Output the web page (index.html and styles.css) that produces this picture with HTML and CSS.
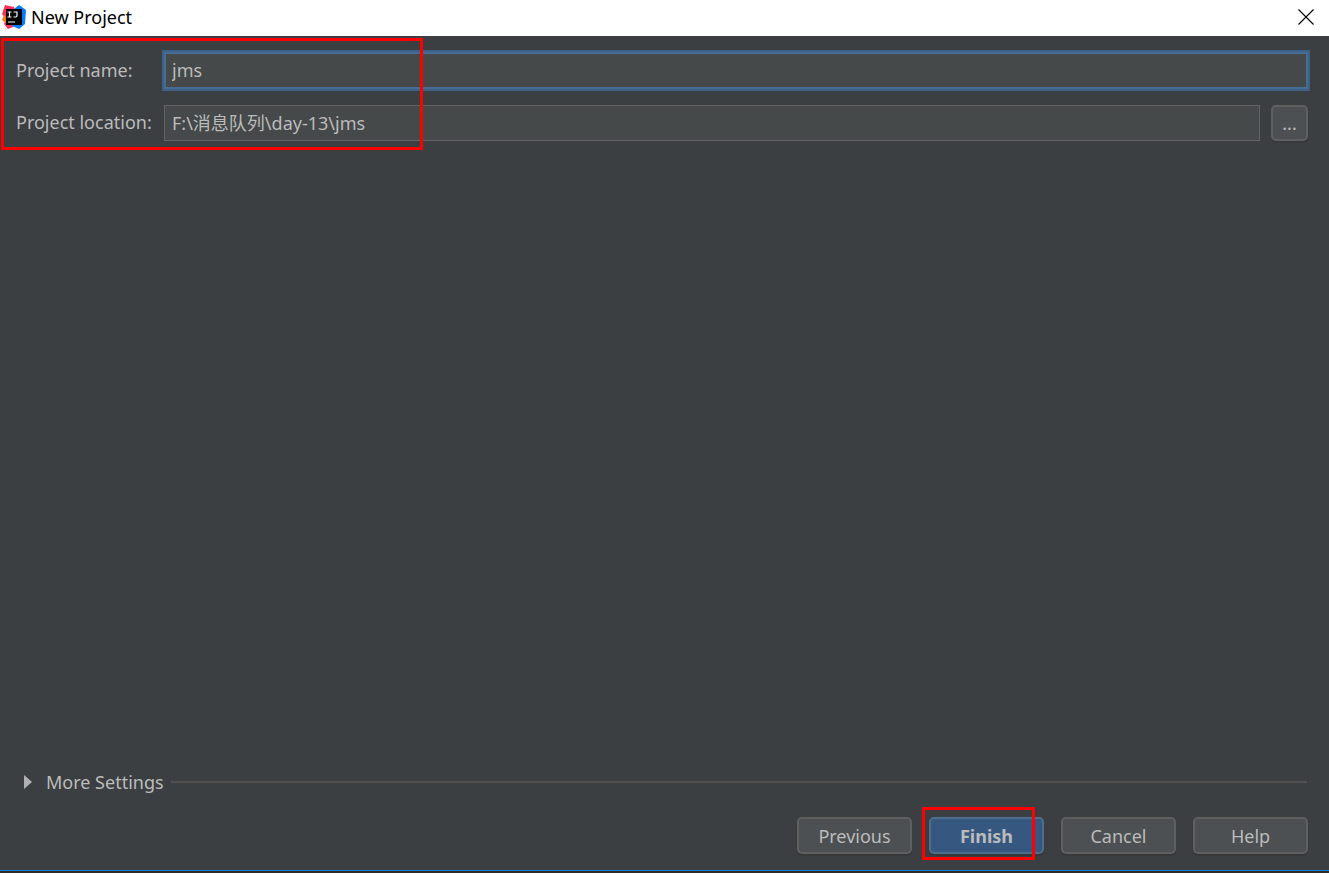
FILE: index.html
```html
<!DOCTYPE html>
<html lang="en">
<head>
    <meta charset="UTF-8">
    <meta name="viewport" content="width=device-width, initial-scale=1.0">
    <title>New Project</title>
    <link rel="stylesheet" href="styles.css">
</head>
<body>
    <div class="dialog">
        <header class="title-bar">
            <svg class="logo" viewBox="0 0 24 24" aria-hidden="true">
                <path fill="#fe315d" d="M3 0l9 2 3 9-4 11-5 2-4-5 2-5-4-5z"/>
                <path fill="#f97a12" d="M2 10l-2 5 5 4 2-4z"/>
                <path fill="#087cfa" d="M12 4l5-4 7 5-1 14-6 5-7-3z"/>
                <path fill="#000" d="M4 4h16v16H4z"/>
                <path fill="none" stroke="#fff" stroke-width="1.200" d="M5.500 7h4M7.500 7v5M5.500 12h4M11.500 7h3.500v3.500q0 1.500-1.500 1.500h-2M6 17h7"/>
            </svg>
            <h1>New Project</h1>
            <button type="button" class="close" aria-label="Close">
                <svg viewBox="0 0 16 16" aria-hidden="true">
                    <path fill="none" stroke="#000" stroke-width="1.100" d="M.5.5l15 15M15.500.5l-15 15"/>
                </svg>
            </button>
        </header>
        <form class="content">
            <div class="fields">
                <div class="row">
                    <label for="projectName">Project name:</label>
                    <input type="text" id="projectName" class="active" value="jms">
                </div>
                <div class="row">
                    <label for="projectLocation">Project location:</label>
                    <input type="text" id="projectLocation" value="F:\消息队列\day-13\jms">
                    <button type="button" class="browse" aria-label="Browse">...</button>
                </div>
                <div class="mark mark-fields"></div>
            </div>
            <div class="more">
                <button type="button" class="more-toggle">
                    <svg viewBox="0 0 8 14" aria-hidden="true"><path fill="#afb1b3" d="M0 0l8 7-8 7z"/></svg>
                    More Settings
                </button>
                <div class="line"></div>
            </div>
            <div class="buttons">
                <button type="button">Previous</button>
                <div class="finish">
                    <button type="button" class="primary">Finish</button>
                    <div class="mark mark-finish"></div>
                </div>
                <button type="button">Cancel</button>
                <button type="button">Help</button>
            </div>
        </form>
    </div>
</body>
</html>
```
FILE: styles.css
```css
* {
    box-sizing: border-box;
}
body {
    margin: 0;
    font-family: "Noto Sans", "Noto Sans CJK SC", sans-serif;
    font-size: 18px;
    line-height: 24px;
    color: #bbbbbb;
    background: #3c3f41;
}
button, input {
    font: inherit;
    color: inherit;
}
.dialog {
    display: flex;
    flex-direction: column;
    min-height: 100vh;
    border-bottom: 2px solid #2b2b2b;
}
.title-bar {
    display: flex;
    align-items: center;
    height: 36px;
    padding: 0 15px 2px 2px;
    background: #fff;
    color: #000;
}
.logo {
    width: 24px;
    height: 24px;
    margin-right: 5px;
}
h1 {
    flex: 1;
    margin: 0;
    font-size: 18px;
    font-weight: normal;
    line-height: 24px;
}
.close {
    display: flex;
    padding: 0;
    border: none;
    background: none;
}
.close svg {
    width: 16px;
    height: 16px;
}
.content {
    flex: 1;
    display: flex;
    flex-direction: column;
    border-bottom: 1px solid #1a7fd4;
}
.fields {
    position: relative;
    display: flex;
    flex-direction: column;
    gap: 16px;
    padding: 16px 21px 9px 16px;
}
.row {
    display: flex;
    align-items: center;
}
.row label {
    width: 148px;
    padding-bottom: 2px;
}
.row input {
    flex: 1;
    min-width: 0;
    height: 36px;
    padding: 0 7px 2px;
    border: 1px solid #646464;
    border-radius: 0;
    background: #45494a;
    outline: none;
}
.row .active {
    height: 37px;
    border: 2px solid #466d94;
    padding: 0 6px 2px;
    box-shadow: 0 0 0 2px #3d6185;
}
.browse, .buttons button {
    height: 37px;
    padding: 0;
    border: 2px solid #5e6060;
    border-radius: 5px;
    background: #4c5052;
    box-shadow: 0 2px 1px #363839;
}
.row .browse {
    width: 37px;
    height: 36px;
    margin-left: 11px;
}
.more {
    display: flex;
    align-items: center;
    gap: 7px;
    margin-top: auto;
    padding: 0 22px 0 24px;
}
.more-toggle {
    display: flex;
    align-items: center;
    gap: 14px;
    padding: 0;
    border: none;
    background: none;
}
.more-toggle svg {
    width: 8px;
    height: 14px;
}
.line {
    flex: 1;
    height: 2px;
    background: #515151;
}
.buttons {
    display: flex;
    justify-content: flex-end;
    gap: 17px;
    padding: 23px 21px 16px;
}
.buttons button {
    width: 115px;
}
.finish {
    position: relative;
}
.buttons .primary {
    border-color: #4c708c;
    background: #365880;
    font-weight: bold;
}
/* red highlight frames */
.mark {
    position: absolute;
    border: 3px solid #ff0000;
    pointer-events: none;
}
.mark-fields {
    top: 2px;
    left: 1px;
    bottom: 0;
    width: 422px;
}
.mark-finish {
    top: -10px;
    left: -7px;
    width: 113px;
    height: 53px;
}
```
